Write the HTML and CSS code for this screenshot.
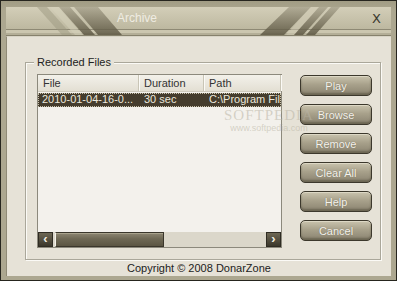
FILE: index.html
```html
<!DOCTYPE html>
<html lang="en">
<head>
    <meta charset="UTF-8">
    <title>Archive</title>
    <link rel="stylesheet" href="styles.css">
</head>
<body>
    <div class="window">
        <div class="caption">
            <div class="titlebar">
                <span class="title">Archive</span>
                <span class="close">X</span>
            </div>
            <div class="rule"></div>
            <svg class="stripes" width="385" height="28" viewBox="0 0 385 28">
                <defs>
                    <linearGradient id="fadeDown" x1="0" y1="0" x2="0" y2="1">
                        <stop offset="0" stop-color="#726c57" stop-opacity="0.35"/>
                        <stop offset="1" stop-color="#625c48" stop-opacity="0.9"/>
                    </linearGradient>
                </defs>
                <polygon points="31,0 41,0 66,28 56,28" fill="#9c977f" opacity="0.5"/>
                <polygon points="44,0 52,0 77,28 69,28" fill="#d6d1bb" opacity="0.5"/>
                <polygon points="53,0 64,0 89,28 78,28" fill="url(#fadeDown)"/>
                <polygon points="68,0 92,0 116,28 92,28" fill="url(#fadeDown)"/>
                <polygon points="283,0 305,0 278,28 254,28" fill="url(#fadeDown)"/>
                <polygon points="305,0 313,0 288,28 280,28" fill="#cfcab3" opacity="0.5"/>
                <polygon points="313,0 322,0 297,28 288,28" fill="url(#fadeDown)"/>
                <polygon points="325,0 334,0 309,28 300,28" fill="url(#fadeDown)"/>
            </svg>
        </div>
        <div class="content">
            <div class="group">
                <span class="legend">Recorded Files</span>
                <div class="group-body">
                    <div class="listview">
                        <div class="list-header">
                            <div class="col col-file">File</div>
                            <div class="col col-duration">Duration</div>
                            <div class="col col-path">Path</div>
                        </div>
                        <div class="list-rows">
                            <div class="row selected">
                                <div class="col col-file">2010-01-04-16-0...</div>
                                <div class="col col-duration">30 sec</div>
                                <div class="col col-path">C:\Program Fil</div>
                            </div>
                            <div class="watermark">
                                <span class="wm-big">SOFTPEDIA</span>
                                <span class="wm-small">www.softpedia.com</span>
                            </div>
                        </div>
                        <div class="hscroll">
                            <div class="sb-btn">&lsaquo;</div>
                            <div class="sb-track">
                                <div class="sb-thumb"></div>
                            </div>
                            <div class="sb-btn">&rsaquo;</div>
                        </div>
                    </div>
                    <div class="buttons">
                        <button>Play</button>
                        <button>Browse</button>
                        <button>Remove</button>
                        <button>Clear All</button>
                        <button>Help</button>
                        <button>Cancel</button>
                    </div>
                </div>
            </div>
            <div class="copyright">Copyright &copy; 2008 DonarZone</div>
        </div>
    </div>
</body>
</html>
```

FILE: styles.css
```css
* {
    box-sizing: border-box;
}
body {
    margin: 0;
    background-color: #1e1d18;
    font-family: "Liberation Sans", Arial, sans-serif;
    font-size: 11px;
}
.window {
    width: 397px;
    height: 281px;
    display: flex;
    flex-direction: column;
    border: 1px solid #26251e;
    padding: 6px 5px 4px 5px;
    background: linear-gradient(to bottom, #a19c84 0px, #aca790 10px, #aca790 100%);
}
.caption {
    position: relative;
    height: 29px;
    flex-shrink: 0;
}
.stripes {
    position: absolute;
    left: 0;
    top: 0;
}
.titlebar {
    height: 22px;
    display: flex;
    align-items: center;
    justify-content: space-between;
    padding: 0 10px 0 111px;
    background: linear-gradient(to bottom, #d3ceb8, #bdb8a0);
}
.title {
    position: relative;
    z-index: 1;
    color: #efece2;
    font-size: 12px;
}
.close {
    color: #3b392f;
    font-size: 13px;
    font-family: "DejaVu Sans", sans-serif;
}
.rule {
    height: 7px;
    border-top: 1px solid #8e8974;
    border-bottom: 1px solid #86816c;
    background-color: #cbc6af;
    box-shadow: inset 0 -2px 0 #b3ae97;
}
.content {
    flex: 1;
    display: flex;
    flex-direction: column;
    background-color: #e6e2d7;
    border-left: 1px solid #8f8a76;
    border-top: 1px solid #d8d4c6;
}
.group {
    position: relative;
    margin: 25px 0 0 18px;
    width: 356px;
    height: 198px;
    border: 1px solid #aaa79a;
    box-shadow: inset 1px 1px 0 #fbfaf6, 1px 1px 0 #fbfaf6;
}
.legend {
    position: absolute;
    top: -8px;
    left: 8px;
    padding: 0 3px;
    background-color: #e6e2d7;
    color: #222;
    font-size: 11px;
    line-height: 14px;
}
.group-body {
    display: flex;
    padding: 11px 0 0 11px;
}
.listview {
    width: 245px;
    height: 174px;
    display: flex;
    flex-direction: column;
    border: 1px solid #8c897c;
    background-color: #f3f1ec;
}
.list-header {
    display: flex;
    height: 17px;
    background: linear-gradient(to bottom, #f3f1ea, #e3dfd3);
    border-bottom: 1px solid #cfcbbd;
}
.list-header .col {
    border-right: 1px solid #c9c5b6;
    box-shadow: 1px 0 0 #fbfaf6;
    color: #333;
    line-height: 16px;
}
.col {
    padding-left: 5px;
    white-space: nowrap;
    overflow: hidden;
}
.col-file {
    width: 101px;
}
.col-duration {
    width: 65px;
}
.col-path {
    flex: 1;
}
.list-rows {
    position: relative;
    flex: 1;
    padding-top: 1px;
}
.row {
    display: flex;
    height: 14px;
    line-height: 13px;
}
.row.selected {
    background-color: #453d2e;
    color: #ece8dc;
    outline: 1px dotted #c9c2ac;
    outline-offset: -1px;
}
.row.selected .col-file {
    padding-left: 4px;
}
.watermark {
    position: absolute;
    left: 186px;
    top: 16px;
    display: flex;
    flex-direction: column;
    align-items: center;
    color: rgba(185, 180, 164, 0.55);
    pointer-events: none;
}
.wm-big {
    font-size: 15px;
    line-height: 15px;
    font-family: "Liberation Serif", serif;
    letter-spacing: 1px;
}
.wm-small {
    font-size: 9px;
    line-height: 11px;
}
.hscroll {
    display: flex;
    height: 15px;
    background-color: #dbd7ca;
}
.sb-btn {
    width: 15px;
    height: 15px;
    background: linear-gradient(to bottom, #6d6754, #3b372b);
    border: 1px solid #2f2c23;
    color: #f3f0e6;
    font-size: 13px;
    font-weight: bold;
    line-height: 11px;
    text-align: center;
}
.sb-track {
    flex: 1;
    padding-left: 2px;
}
.sb-thumb {
    width: 109px;
    height: 15px;
    border: 1px solid #3a362b;
    border-left: 1px solid #f4f2ea;
    background: linear-gradient(to bottom, #8d8672 0%, #6e6854 45%, #5b5543 100%);
    box-shadow: inset 0 1px 0 #a8a28c;
}
.buttons {
    display: flex;
    flex-direction: column;
    gap: 8px;
    margin: 1px 0 0 18px;
}
.buttons button {
    width: 72px;
    height: 21px;
    padding: 0;
    border: 1px solid #3c382c;
    border-radius: 5px;
    background: linear-gradient(to bottom, #c9c3ad 0%, #a8a18b 45%, #8a8370 100%);
    box-shadow: inset 0 1px 0 #ddd8c5, inset 0 -2px 2px #6c6653;
    color: #f5f3ec;
    font-family: "Liberation Sans", Arial, sans-serif;
    font-size: 11px;
    text-shadow: 0 0 1px #6a6452;
}
.copyright {
    flex: 1;
    display: flex;
    align-items: center;
    justify-content: center;
    color: #1c1c1c;
    font-size: 11px;
}
```
